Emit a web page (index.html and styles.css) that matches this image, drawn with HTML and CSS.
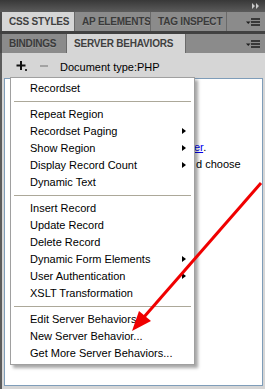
FILE: index.html
```html
<!DOCTYPE html>
<html lang="en">

<head>
    <meta charset="UTF-8">
    <meta name="viewport" content="width=device-width, initial-scale=1.0">
    <title>Server Behaviors</title>
    <link rel="stylesheet" href="styles.css">
</head>

<body>
    <div class="titlebar">
        <svg class="collapse" width="8" height="6" viewBox="0 0 8 6">
            <path d="M0 0L3 3L0 6ZM4 0L7 3L4 6Z" fill="#c9c9c9" />
        </svg>
    </div>

    <div class="tab-row">
        <div class="tab active tab-css">CSS STYLES</div>
        <div class="tab tab-ap">AP ELEMENTS</div>
        <div class="tab tab-tag">TAG INSPECT</div>
        <div class="tab-fill">
            <svg class="panel-menu" width="14" height="8" viewBox="0 0 14 8">
                <path d="M0 3.5h4.5l-2.25 2.5z" fill="#1e1e1e" />
                <path d="M5 1h9M5 4h9M5 7h9" stroke="#1e1e1e" stroke-width="1.5" />
            </svg>
        </div>
    </div>

    <div class="divider"></div>

    <div class="tab-row">
        <div class="tab tab-bindings">BINDINGS</div>
        <div class="tab active tab-server">SERVER BEHAVIORS</div>
        <div class="tab-fill">
            <svg class="panel-menu" width="14" height="8" viewBox="0 0 14 8">
                <path d="M0 3.5h4.5l-2.25 2.5z" fill="#1e1e1e" />
                <path d="M5 1h9M5 4h9M5 7h9" stroke="#1e1e1e" stroke-width="1.5" />
            </svg>
        </div>
    </div>

    <div class="panel-body">
        <div class="toolbar">
            <svg class="tool-plus" width="11" height="10" viewBox="0 0 11 10">
                <path d="M4 0h2v3.5h3.5v2h-3.5v3.5h-2v-3.5h-3.5v-2h3.5z" fill="#111" />
                <rect x="9" y="8" width="2" height="2" fill="#333" />
            </svg>
            <span class="tool-minus"></span>
            <span class="doc-type">Document type:PHP</span>
        </div>

        <div class="content">
            <div class="help">
                <div class="help-line line-server"><a href="#">er</a>.</div>
                <div class="help-line line-choose">d choose</div>
            </div>

            <div class="menu">
                <div class="item">Recordset</div>
                <div class="sep"></div>
                <div class="item">Repeat Region</div>
                <div class="item sub">Recordset Paging</div>
                <div class="item sub">Show Region</div>
                <div class="item sub">Display Record Count</div>
                <div class="item">Dynamic Text</div>
                <div class="sep"></div>
                <div class="item">Insert Record</div>
                <div class="item">Update Record</div>
                <div class="item">Delete Record</div>
                <div class="item sub">Dynamic Form Elements</div>
                <div class="item sub">User Authentication</div>
                <div class="item">XSLT Transformation</div>
                <div class="sep"></div>
                <div class="item">Edit Server Behaviors</div>
                <div class="item">New Server Behavior...</div>
                <div class="item">Get More Server Behaviors...</div>
            </div>
        </div>
    </div>

    <!-- red callout arrow drawn over the screenshot -->
    <svg class="callout" width="265" height="389" viewBox="0 0 265 389">
        <line x1="261" y1="183" x2="144" y2="317" stroke="#f00000" stroke-width="3" />
        <polygon points="132,331 139,311 151,321" fill="#f00000" />
    </svg>
</body>

</html>
```

FILE: styles.css
```css
body {
    margin: 0;
    width: 265px;
    height: 389px;
    overflow: hidden;
    position: relative;
    background-color: #d6d6d6;
    font-family: "Liberation Sans", Arial, sans-serif;
    font-size: 11px;
    color: #000;
}

.titlebar {
    height: 12px;
    background: linear-gradient(#383838, #5b5b5b);
    display: flex;
    justify-content: flex-end;
    align-items: center;
    padding-right: 5px;
}

.tab-row {
    height: 19px;
    display: flex;
    background-color: #8b8b8b;
    border-left: 2px solid #4c4c4c;
}

.tab {
    box-sizing: border-box;
    height: 19px;
    line-height: 19px;
    padding-left: 7px;
    font-size: 10px;
    font-weight: bold;
    letter-spacing: -0.2px;
    color: #3a3a3a;
    white-space: nowrap;
    overflow: hidden;
    border-right: 1px solid #6a6a6a;
    text-shadow: 0 1px 0 rgba(255, 255, 255, 0.15);
}

.tab.active {
    background-color: #d6d6d6;
    color: #404040;
}

.tab-css {
    width: 73px;
}

.tab-ap,
.tab-tag {
    width: 76px;
}

.tab-bindings {
    width: 65px;
}

.tab-server {
    width: 119px;
}

.tab-fill {
    flex: 1;
    display: flex;
    justify-content: flex-end;
    align-items: center;
    padding-right: 5px;
}

.divider {
    height: 3px;
    background-color: #414141;
}

.panel-body {
    border-left: 2px solid #5c5c5c;
    padding: 0 2px 3px 2px;
}

.toolbar {
    height: 25px;
    display: flex;
    align-items: center;
    padding-left: 12px;
}

.tool-plus {
    margin-top: 1px;
}

.tool-minus {
    width: 8px;
    height: 2px;
    background-color: #a3a3a3;
    margin-left: 13px;
}

.doc-type {
    margin-left: 12px;
    margin-top: 2px;
}

.content {
    position: relative;
    height: 306px;
    background-color: #fff;
    border: 1px solid #7f9db9;
}

.help {
    padding-top: 60px;
    padding-left: 188px;
    line-height: 17px;
}

.help-line {
    white-space: nowrap;
}

.help-line a {
    color: #0000ee;
}

.line-server {
    padding-left: 1px;
}

.line-choose {
    padding-left: 3px;
}

.menu {
    position: absolute;
    left: 5px;
    top: -2px;
    width: 183px;
    padding: 2px 0 2px 0;
    background-color: #fff;
    border: 1px solid #a0a0a0;
    box-shadow: 3px 3px 3px rgba(0, 0, 0, 0.35);
}

.item {
    position: relative;
    height: 17px;
    line-height: 17px;
    padding-left: 19px;
    white-space: nowrap;
}

.item.sub::after {
    content: "";
    position: absolute;
    right: 8px;
    top: 5px;
    border-left: 4px solid #000;
    border-top: 3.5px solid transparent;
    border-bottom: 3.5px solid transparent;
}

.sep {
    height: 1px;
    margin: 4px 3px;
    background-color: #aca899;
}

.callout {
    position: absolute;
    left: 0;
    top: 0;
    pointer-events: none;
}
```
